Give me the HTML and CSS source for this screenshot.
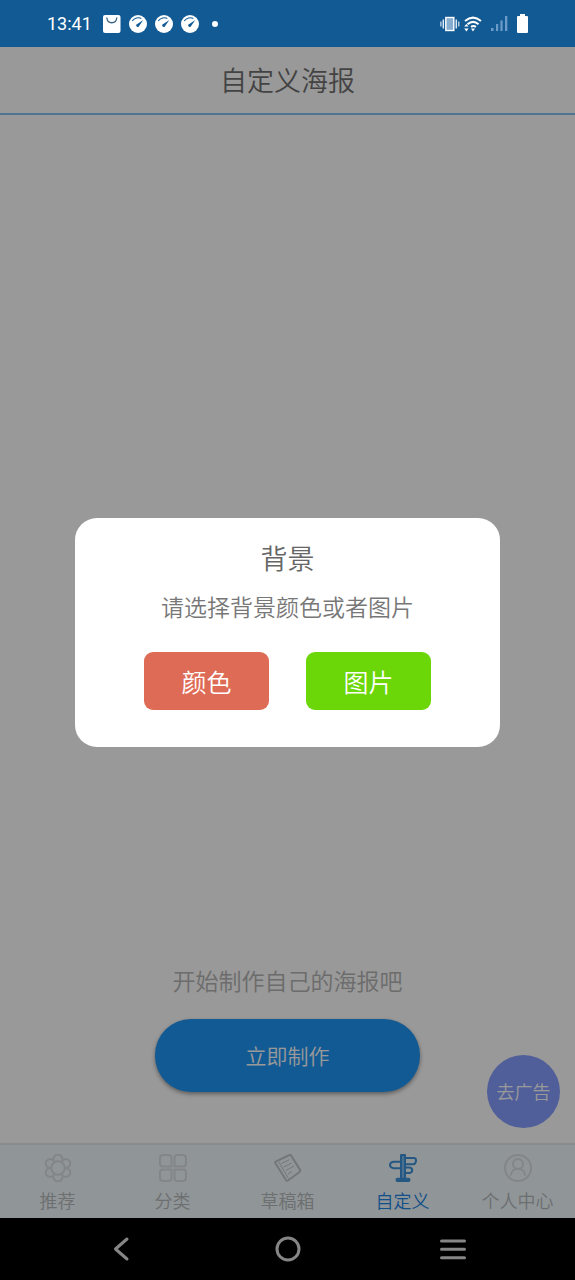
FILE: index.html
```html
<!DOCTYPE html>
<html lang="zh-CN">
<head>
<meta charset="utf-8">
<meta name="viewport" content="width=device-width, initial-scale=1">
<title>自定义海报</title>
<link rel="stylesheet" href="styles.css">
</head>
<body>
<div class="phone">
  <div class="status">
    <div class="status-left">
      <span class="clock">13:41</span>
      <svg class="note-icon" viewBox="0 0 18 18" aria-hidden="true"><rect x="0" y="0" width="17.500" height="18" rx="2" fill="#fff"/><path d="M3.800 2.500c.5 7 9.500 7 10 0" fill="none" stroke="#3a6585" stroke-width="1.300"/></svg>
      <svg class="note-icon" viewBox="0 0 18 18" aria-hidden="true"><circle cx="9" cy="9" r="9" fill="#fff"/><path d="M3.200 6C5.500 2.800 9.500 2.200 12.300 3.400" fill="none" stroke="#125a94" stroke-width="1.100"/><path d="M14.300 5 10.300 10.800a1.600 1.600 0 1 1-2-1.900z" fill="#125a94"/></svg>
      <svg class="note-icon" viewBox="0 0 18 18" aria-hidden="true"><circle cx="9" cy="9" r="9" fill="#fff"/><path d="M3.200 6C5.500 2.800 9.500 2.200 12.300 3.400" fill="none" stroke="#125a94" stroke-width="1.100"/><path d="M14.300 5 10.300 10.800a1.600 1.600 0 1 1-2-1.900z" fill="#125a94"/></svg>
      <svg class="note-icon" viewBox="0 0 18 18" aria-hidden="true"><circle cx="9" cy="9" r="9" fill="#fff"/><path d="M3.200 6C5.500 2.800 9.500 2.200 12.300 3.400" fill="none" stroke="#125a94" stroke-width="1.100"/><path d="M14.300 5 10.300 10.800a1.600 1.600 0 1 1-2-1.900z" fill="#125a94"/></svg>
      <span class="more-dot"></span>
    </div>
    <div class="status-right">
      <svg width="20" height="16" viewBox="0 0 20 16" aria-hidden="true"><rect x="5.800" y="1.500" width="8" height="13" fill="#86acd0" stroke="#fff" stroke-width="1.400"/><path d="M3.300 3.500v9M16.300 3.500v9" stroke="#dce8f3" stroke-width="1.500"/><path d="M.9 5.500v5M18.800 5.500v5" stroke="#c5d8e9" stroke-width="1.300"/></svg>
      <svg class="wifi" width="18" height="16" viewBox="0 0 18 16" aria-hidden="true"><g fill="none" stroke="#fff" stroke-width="2"><path d="M1 5Q9-1.800 17 5"/><path d="M3.500 8.200Q9 3.500 14.600 8.200"/><path d="M7 10.800Q9.500 9.200 12 10.800"/></g><path d="M7 12.600h4L9 15.600zM.2 10.500 2.400 8l2.200 2.500zM.2 12.500h4.400L2.400 15.500z" fill="#fff"/></svg>
      <svg class="signal" width="17" height="16" viewBox="0 0 17 16" aria-hidden="true"><path d="M0 12h2.500v3H0zM5 8h2.200v7H5zM9.400 4.500h2.200V15H9.400zM14 0h2.300v15H14z" fill="#6b9bc9"/></svg>
      <svg width="11" height="19" viewBox="0 0 11 19" aria-hidden="true"><path d="M3 0h5v2h2q1 0 1 1v15q0 1-1 1H1q-1 0-1-1V3q0-1 1-1h2z" fill="#fff"/></svg>
    </div>
  </div>

  <div class="app">
    <header class="header"><h1 class="title">自定义海报</h1></header>
    <main class="main">
      <p class="hint">开始制作自己的海报吧</p>
      <button class="make" type="button">立即制作</button>
      <button class="no-ads" type="button">去广告</button>
    </main>
    <nav class="tabs">
      <a class="tab" href="#recommend">
        <svg class="tab-icon" viewBox="0 0 28 28" aria-hidden="true"><circle cx="14" cy="14" r="6.800"/><path d="M21.800 14A4.500 4.500 0 1 0 17.900 7.200 4.500 4.500 0 1 0 10.100 7.200 4.500 4.500 0 1 0 6.200 14 4.500 4.500 0 1 0 10.100 20.800 4.500 4.500 0 1 0 17.900 20.800 4.500 4.500 0 1 0 21.800 14z"/></svg>
        <span>推荐</span></a>
      <a class="tab" href="#category">
        <svg class="tab-icon" viewBox="0 0 28 28" aria-hidden="true"><path d="M4 1h5.500q3 0 3 3v8.500H4q-3 0-3-3V4q0-3 3-3zM18.500 1H24q3 0 3 3v5.500q0 3-3 3h-8.500V4q0-3 3-3zM4 15.500h8.500V24q0 3-3 3H4q-3 0-3-3v-5.500q0-3 3-3zM15.500 15.500H24q3 0 3 3V24q0 3-3 3h-5.500q-3 0-3-3z"/></svg>
        <span>分类</span></a>
      <a class="tab" href="#drafts">
        <svg class="tab-icon dark" viewBox="0 0 28 28" aria-hidden="true"><path d="M2 7.300 15.500 1q1-.4 1.700.6l9 14.500q.5 1.200-.6 1.900l-11.600 8.500q-1.200.7-2-.5L1.300 9q-.4-1.200.7-1.700z"/><path class="fine" d="M7.500 9.500l8-3.800M9.700 13l8-4M12 16.500l8-4.500M14 20l4-2.700M4.500 7.500l10 17"/></svg>
        <span>草稿箱</span></a>
      <a class="tab active" href="#custom" aria-current="page">
        <svg class="tab-icon" viewBox="0 0 28 28" aria-hidden="true"><path class="tint" d="M12 1h4v24h4v2H8v-2h4z"/><path d="M12 1h4v24h-4zM16 4h8.500q2.500 0 2.500 2.200 0 4-3 4H16zM12 7.800H4.500Q1 8.500 1 11t3.500 3.200H12zM16 13.500h4.500q2.700.5 2.700 2.700T20.500 19H16zM8.500 24.800h11q1 0 1 1.100t-1 1.100h-11q-1 0-1-1.100t1-1.100z"/></svg>
        <span>自定义</span></a>
      <a class="tab" href="#profile">
        <svg class="tab-icon" viewBox="0 0 28 28" aria-hidden="true"><circle cx="14" cy="14" r="13"/><circle cx="14" cy="10" r="5"/><path d="M7 21.500c0-9 14-9 14 0"/></svg>
        <span>个人中心</span></a>
    </nav>
    <div class="scrim">
      <section class="dialog" role="dialog" aria-modal="true" aria-labelledby="dialog-title">
        <h2 class="dialog-title" id="dialog-title">背景</h2>
        <p class="dialog-text">请选择背景颜色或者图片</p>
        <div class="choices">
          <button class="choice color" type="button">颜色</button>
          <button class="choice picture" type="button">图片</button>
        </div>
      </section>
    </div>
  </div>

  <div class="sysnav">
    <button class="sys" type="button" aria-label="返回"><svg width="28" height="28" viewBox="0 0 28 28"><path d="M19 4 7.500 14 19 24"/></svg></button>
    <button class="sys" type="button" aria-label="主页"><svg width="28" height="28" viewBox="0 0 28 28"><circle cx="14" cy="14" r="11"/></svg></button>
    <button class="sys" type="button" aria-label="最近任务"><svg width="28" height="28" viewBox="0 0 28 28"><path d="M2.500 6h23M2.500 14.300h23M2.500 22.700h23"/></svg></button>
  </div>
</div>
</body>
</html>
```
FILE: styles.css
```css
* { box-sizing: border-box; }
body {
  margin: 0;
  font-family: Roboto, "Noto Sans CJK SC", sans-serif;
  font-weight: 350;
}
h1, h2, p { margin: 0; font-weight: inherit; }
button { border: 0; padding: 0; font: inherit; cursor: pointer; }
svg { display: block; }
.phone { display: flex; flex-direction: column; min-height: 100vh; }

.status {
  display: flex;
  justify-content: space-between;
  align-items: center;
  height: 47px;
  padding: 0 47px;
  background: #125a94;
  color: #fff;
}
.status-left, .status-right { display: flex; align-items: center; }
.status-left { gap: 8px; }
.clock { font-size: 18px; font-weight: 400; margin-right: 3px; }
.note-icon { width: 18px; height: 18px; }
.more-dot { width: 6px; height: 6px; margin-left: 5px; border-radius: 50%; background: #fff; }
.wifi { margin-left: 4px; }
.signal { margin: 0 9px; }

.app { position: relative; flex: 1; display: flex; flex-direction: column; background: #fff; }
.header {
  display: flex;
  justify-content: center;
  align-items: center;
  height: 68px;
  padding-top: 4px;
  border-bottom: 2px solid #84c0f5;
}
.title { font-size: 27px; line-height: 40px; color: #707070; }
.main {
  position: relative;
  flex: 1;
  display: flex;
  flex-direction: column;
  align-items: center;
  justify-content: flex-end;
  gap: 19px;
  padding-bottom: 51px;
}
.hint { font-size: 23px; line-height: 34px; color: #b4b4b4; }
.make {
  width: 46%;
  height: 73px;
  border-radius: 36px;
  background: #1e96f7;
  color: #fff;
  font-size: 21px;
  padding-bottom: 2px;
  box-shadow: 0 2px 4px rgba(0, 0, 0, .4);
}
.no-ads {
  position: absolute;
  right: 15px;
  bottom: 15px;
  width: 73px;
  height: 73px;
  padding-bottom: 2px;
  border-radius: 50%;
  background: #859eff;
  color: #fff;
  font-size: 18px;
}

.tabs {
  display: grid;
  grid-template-columns: repeat(5, 1fr);
  height: 75px;
  border-top: 2px solid #e4eaee;
  background: #f0f8fd;
}
.tab {
  display: flex;
  flex-direction: column;
  align-items: center;
  gap: 7px;
  padding-top: 9px;
  color: #b4b8ba;
  font-size: 18px;
  line-height: 26px;
  text-decoration: none;
}
.tab-icon { width: 28px; height: 28px; fill: none; stroke: #dadfe2; stroke-width: 2; stroke-linejoin: round; }
.dark { stroke: #c2c7ca; stroke-width: 2; }
.fine { stroke-width: 1; }
.tab-icon .tint { fill: #7dbcf0; stroke: none; }
.active { color: #1e86e6; }
.active .tab-icon { stroke: #3c91d8; stroke-width: 2; }

.scrim {
  position: absolute;
  inset: 0;
  display: flex;
  align-items: center;
  justify-content: center;
  background: rgba(0, 0, 0, .4);
}
.dialog {
  width: 74%;
  padding: 22px 16px 37px;
  border-radius: 22px;
  background: #fff;
  text-align: center;
}
.dialog-title { font-size: 27px; line-height: 40px; color: #666; }
.dialog-text { margin: 12px 0 26px; font-size: 23px; line-height: 34px; color: #777; }
.choices { display: flex; justify-content: center; gap: 37px; }
.choice { width: 125px; height: 58px; border-radius: 9px; color: #fff; font-size: 25px; }
.color { background: #de6b55; }
.picture { background: #6bd608; }

.sysnav {
  display: flex;
  justify-content: space-between;
  align-items: center;
  height: 62px;
  padding: 0 108px;
  background: #000;
}
.sys { background: none; }
.sys svg { fill: none; stroke: #868686; stroke-width: 3; stroke-linecap: round; stroke-linejoin: round; }
```
